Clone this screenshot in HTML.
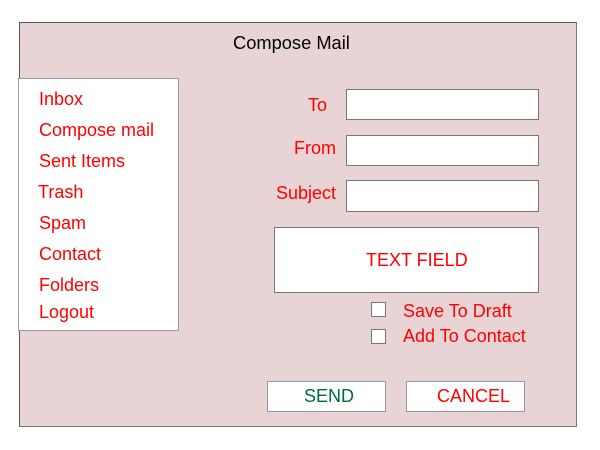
<!DOCTYPE html>
<html><head><style>
body{margin:0;width:600px;height:450px;background:#fff;position:relative;font-family:"Liberation Sans",sans-serif;overflow:hidden}
.a{position:absolute;line-height:20px}
.main{left:19px;top:22px;width:556px;height:403px;background:#e8d3d5;border:1px solid #555;border-right-color:#777;border-bottom-color:#777}
.side{left:18px;top:78px;width:159px;height:251px;background:#fff;border:1px solid #999}
.r{color:#f00;font-size:18px}
.box{background:#fff;border:1px solid #777}
.cb{width:13px;height:13px;background:#fff;border:1px solid #777}
</style></head><body>
<div class="a main"></div>
<div class="a" style="left:233px;top:33px;font-size:18.3px;color:#000">Compose Mail</div>
<div class="a side"></div>
<div class="a r" style="left:39px;top:89px">Inbox</div>
<div class="a r" style="left:39px;top:120px">Compose mail</div>
<div class="a r" style="left:39px;top:151px">Sent Items</div>
<div class="a r" style="left:38px;top:182px">Trash</div>
<div class="a r" style="left:39px;top:213px">Spam</div>
<div class="a r" style="left:39px;top:244px">Contact</div>
<div class="a r" style="left:39px;top:275px">Folders</div>
<div class="a r" style="left:39px;top:302px">Logout</div>
<div class="a r" style="left:308px;top:95px">To</div>
<div class="a r" style="left:294px;top:138px">From</div>
<div class="a r" style="left:276px;top:183px">Subject</div>
<div class="a box" style="left:346px;top:89px;width:191px;height:29px"></div>
<div class="a box" style="left:346px;top:135px;width:191px;height:29px"></div>
<div class="a box" style="left:346px;top:180px;width:191px;height:30px"></div>
<div class="a box" style="left:274px;top:227px;width:263px;height:64px"></div>
<div class="a r" style="left:366px;top:250px">TEXT FIELD</div>
<div class="a cb" style="left:371px;top:302px"></div>
<div class="a cb" style="left:371px;top:329px"></div>
<div class="a r" style="left:403px;top:301px">Save To Draft</div>
<div class="a r" style="left:403px;top:326px">Add To Contact</div>
<div class="a box" style="left:267px;top:381px;width:117px;height:29px;border-color:#999"></div>
<div class="a box" style="left:406px;top:381px;width:117px;height:29px;border-color:#999"></div>
<div class="a" style="left:304px;top:386px;font-size:18px;color:#006b35">SEND</div>
<div class="a r" style="left:437px;top:386px">CANCEL</div>
</body></html>
